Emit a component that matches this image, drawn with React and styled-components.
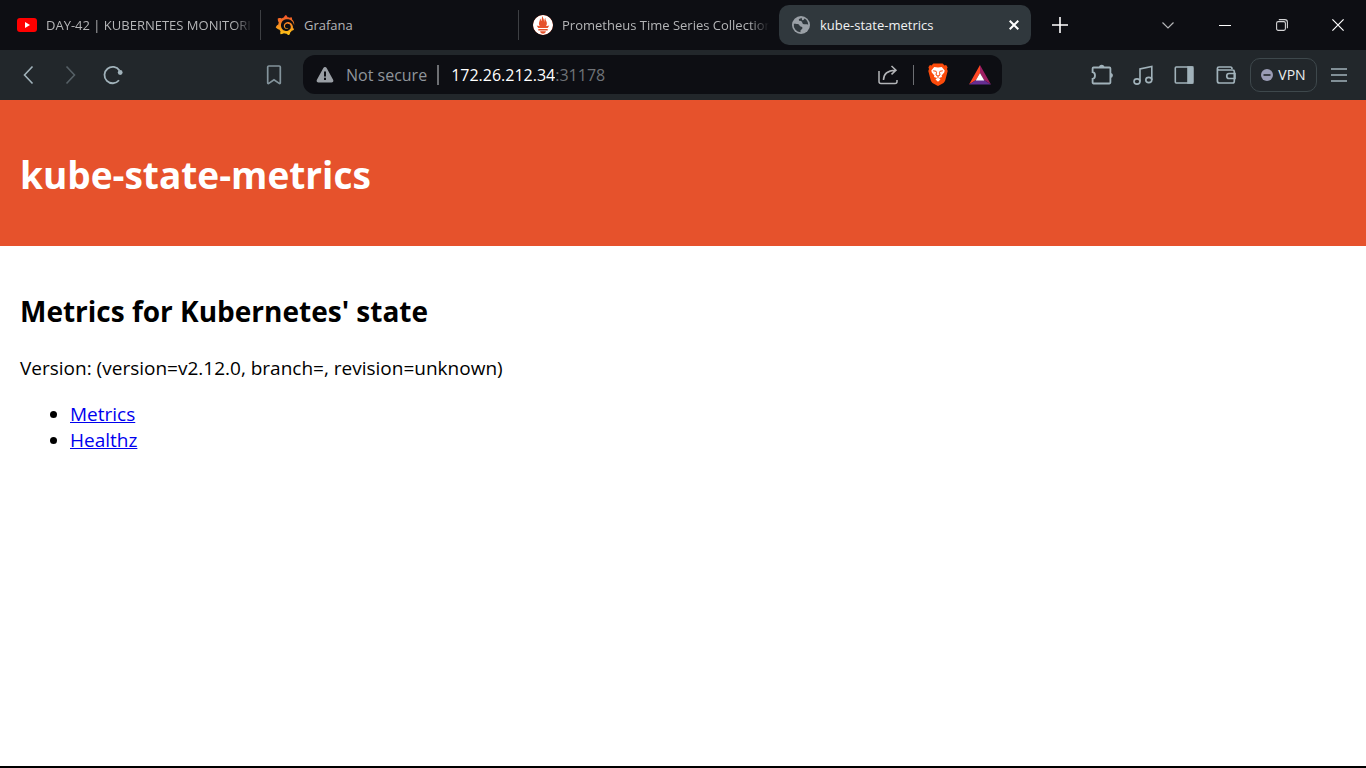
import React from "react";
import styled, { createGlobalStyle, css } from "styled-components";
import { SiGrafana, SiPrometheus } from "react-icons/si";

const GlobalStyle = createGlobalStyle`
  *, *::before, *::after { box-sizing: border-box; }
  html, body, #root { height: 100%; }
  body {
    margin: 0;
    background: #fff;
    color: #000;
    font-family: "Open Sans", "Noto Sans", sans-serif;
  }
  svg { display: block; flex: none; }
`;

const Window = styled.div`
  display: flex;
  flex-direction: column;
  min-height: 100%;
  border-bottom: 2px solid #000;
`;

/* Tab strip */
const TabStrip = styled.header`
  display: flex;
  align-items: center;
  height: 50px;
  padding-left: 5px;
  background: #0d0e13;
`;

const Tabs = styled.nav`
  display: grid;
  grid-template-columns: repeat(4, minmax(0, 1fr));
  flex: 0 1 1026px;
  min-width: 0;
  gap: 6px;
`;

const Tab = styled.div`
  position: relative;
  display: flex;
  min-width: 0;
  align-items: center;
  height: 40px;
  padding: 0 ${(p) => (p.$active ? 9 : 4)}px 0 12px;
  border-radius: 10px;
  background: ${(p) => (p.$active ? "#30383d" : "transparent")};
  ${(p) =>
    p.$divided &&
    css`
      &::after {
        content: "";
        position: absolute;
        top: 5px;
        right: -4px;
        width: 1px;
        height: 30px;
        background: #3d3f43;
      }
    `}
`;

const TabLink = styled.a`
  display: flex;
  flex: 1;
  min-width: 0;
  align-items: center;
  gap: 9px;
  color: ${(p) => (p.$active ? "#f1f2f3" : "#b4b5b7")};
  font-size: 13px;
  line-height: 20px;
  text-decoration: none;
`;

const TabIcon = styled.span`
  display: grid;
  flex: none;
  place-items: center;
  width: 20px;
  height: 20px;
  border-radius: 50%;
`;

const GrafanaMark = styled(SiGrafana)`
  fill: url(#grafana-fill);
`;

const PrometheusMark = styled(SiPrometheus)`
  border-radius: 50%;
  background: #e6522c;
  color: #fff;
`;

const TabTitle = styled.span`
  flex: 1;
  overflow: hidden;
  white-space: nowrap;
  ${(p) =>
    p.$faded &&
    css`
      mask-image: linear-gradient(to right, #000 calc(100% - 20px), transparent);
    `}
`;

const IconButton = styled.button`
  display: grid;
  flex: none;
  place-items: center;
  width: ${(p) => p.$width || 42}px;
  height: 34px;
  padding: 0;
  border: 0;
  background: none;
  color: ${(p) => p.$color || "#a1b2ba"};
`;

const WindowControls = styled.div`
  display: flex;
  margin-left: auto;
`;

/* Toolbar */
const Toolbar = styled.div`
  display: flex;
  align-items: center;
  height: 50px;
  padding: 0 5px 1px 8px;
  background: #22272b;
`;

const NavGroup = styled.div`
  display: flex;
  flex: none;
  margin-right: 119px;
`;

const AddressBar = styled.form`
  display: flex;
  flex: 1;
  min-width: 0;
  align-items: center;
  height: 39px;
  margin: 0 79px 0 8px;
  padding: 0 1px 0 13px;
  border-radius: 12px;
  background: #0d0e13;
  color: #85898e;
  font-size: 16px;
  line-height: 24px;
`;

const Security = styled.button`
  display: flex;
  flex: none;
  align-items: center;
  gap: 12px;
  padding: 0;
  border: 0;
  background: none;
  color: #8f959b;
  font: inherit;
`;

const Rule = styled.span`
  flex: none;
  width: ${(p) => p.$thickness}px;
  height: 20px;
  margin: ${(p) => p.$margin};
  background: #6d6f73;
`;

const Host = styled.input`
  flex: none;
  field-sizing: content;
  padding: 0;
  border: 0;
  outline: 0;
  background: none;
  color: #fff;
  font: inherit;
`;

const Port = styled.label`
  flex: 1;
  color: #6f7378;
`;

const VpnButton = styled.button`
  display: flex;
  flex: none;
  align-items: center;
  justify-content: center;
  gap: 5px;
  width: 67px;
  height: 34px;
  margin-left: 3px;
  padding: 0;
  border: 1px solid #3e484c;
  border-radius: 10px;
  background: none;
  color: #eceef0;
  font: inherit;
  font-size: 14px;
`;

/* Page */
const Banner = styled.header`
  padding: 48px 20px 45px;
  background: #e6522c;
  color: #fff;
`;

const Title = styled.h1`
  margin: 0;
  font-size: 37px;
  font-weight: 700;
  line-height: 53px;
`;

const Content = styled.main`
  padding: 20px;
  font-size: 19px;
  line-height: 26px;
`;

const Subtitle = styled.h2`
  margin: 25px 0 24px;
  font-size: 28px;
  font-weight: 700;
  line-height: 40px;
`;

const Version = styled.p`
  margin: 0 0 20px;
`;

const LinkList = styled.ul`
  margin: 0;
  padding-left: 50px;
`;

const PageLink = styled.a`
  color: #0000ee;
  text-decoration: underline;
`;

function Line({ size = 20, width = 2, children, ...rest }) {
  return (
    <svg
      width={size}
      height={size}
      viewBox={`0 0 ${size} ${size}`}
      fill="none"
      stroke="currentColor"
      strokeWidth={width}
      aria-hidden="true"
      {...rest}
    >
      {children}
    </svg>
  );
}

const YoutubeIcon = () => (
  <svg width="20" height="20" viewBox="0 0 20 20" aria-hidden="true">
    <rect y="3" width="20" height="14" rx="3" fill="#f00" />
    <path d="M8 7l5 3-5 3z" fill="#fff" />
  </svg>
);

const GlobeIcon = () => (
  <svg width="18" height="18" viewBox="0 0 18 18" aria-hidden="true">
    <circle cx="9" cy="9" r="9" fill="#9aa0a6" />
    <path
      d="M1.800 7.800c1.200-.2 3.400.1 4.600.5 1.300.5 1 1.900 2.200 2.200 1.200.2 2 .6 1.800 1.700-.2 1.300-1.700 1.300-1.900 2.400v1.600a7.200 7.200 0 0 1-6.700-8.400zM9.300 1.800c-.9 1.100-2.800.9-2.500 2.300.3 1.300 2 .6 2.900 1.500.8.8.4 2 1.500 2.500 1.500.6 3.200-.2 5 .6A7.200 7.200 0 0 0 12.400 2.600c-.4 1.600-1.300 1.800-2 1.600-.7-.3-.1-1.500-1.100-2.400z"
      fill="#30383d"
    />
  </svg>
);

const BraveIcon = () => (
  <svg width="20" height="23" viewBox="0 0 20 23" aria-hidden="true">
    <path
      d="M5.400.4h9.200l1.900 2 1.600-.3 1.500 2.200-.6 1.600.7 2.200-2.500 9.500c-.4 1.300-1.200 2-2.100 2.700L11 22.600c-.6.4-1.400.4-2 0l-4.100-2.300c-.9-.7-1.700-1.400-2.100-2.700L.3 8.100 1 5.900.4 4.300l1.500-2.200 1.600.3z"
      fill="#fb4b0b"
    />
    <path
      d="M6.200 3.900l3.800.7 3.800-.7 2.900 3.600-.5 2-2.600 2.900.4 1.700-3.100.9 1.600 1.600L10 18.700l-2.500-2.100L9.100 15 6 14.100l.4-1.700-2.600-2.900-.5-2z"
      fill="#fff"
    />
    <path
      d="M5.200 7.800l2.900.5.4 1-.5 2.700 2 1 2-1-.5-2.700.4-1 2.900-.5M10 13v2.200"
      fill="none"
      stroke="#fb4b0b"
      strokeWidth="1"
    />
  </svg>
);

const RewardsIcon = () => (
  <svg width="22" height="20" viewBox="0 0 22 20" aria-hidden="true">
    <path d="M11 0v8L7 15l-7 4.500z" fill="#ff4724" />
    <path d="M11 0l11 19.500-7-4.500-4-7z" fill="#9e1f63" />
    <path d="M0 19.500L7 15h8l7 4.500z" fill="#662d91" />
    <path d="M11 8l4.300 7.500H6.700z" fill="#fff" />
  </svg>
);

const TABS = [
  { title: "DAY-42 | KUBERNETES MONITORI", icon: <YoutubeIcon />, faded: true, divided: true },
  { title: "Grafana", icon: <GrafanaMark size={20} />, divided: true },
  {
    title: "Prometheus Time Series Collection",
    icon: <PrometheusMark size={20} />,
    faded: true,
  },
  { title: "kube-state-metrics", icon: <GlobeIcon />, active: true },
];

function BrowserTabs() {
  return (
    <TabStrip>
      <svg width="0" height="0" aria-hidden="true">
        <linearGradient id="grafana-fill" x1="0" y1="0" x2="0" y2="1">
          <stop offset="0" stopColor="#f0502a" />
          <stop offset="1" stopColor="#fdc716" />
        </linearGradient>
      </svg>
      <Tabs aria-label="Tabs">
        {TABS.map((t) => (
          <Tab key={t.title} $active={t.active} $divided={t.divided}>
            <TabLink href="#" $active={t.active}>
              <TabIcon>{t.icon}</TabIcon>
              <TabTitle $faded={t.faded}>{t.title}</TabTitle>
            </TabLink>
            {t.active && (
              <IconButton type="button" $width={16} $color="#fff" aria-label="Close tab">
                <Line size={10} width={2}>
                  <path d="M.7.7l8.600 8.600M9.300.7L.7 9.300" />
                </Line>
              </IconButton>
            )}
          </Tab>
        ))}
      </Tabs>
      <IconButton type="button" $width={58} $color="#fff" aria-label="New tab">
        <Line size={16} width={1.6}>
          <path d="M8 0v16M0 8h16" />
        </Line>
      </IconButton>
      <WindowControls>
        <IconButton type="button" $width={56} $color="#b5b6b8" aria-label="Search tabs">
          <Line size={12} width={1.2}>
            <path d="M.5 3.500L6 9l5.500-5.500" />
          </Line>
        </IconButton>
        <IconButton type="button" $width={57} $color="#fff" aria-label="Minimize">
          <Line size={12} width={1}>
            <path d="M0 6.500h12" />
          </Line>
        </IconButton>
        <IconButton type="button" $width={57} $color="#d4d4d6" aria-label="Restore">
          <Line size={12} width={1.1}>
            <rect x=".6" y="2.600" width="8.800" height="8.800" rx="1.600" />
            <path d="M2.800.6h6a2.600 2.600 0 0 1 2.600 2.600v6" />
          </Line>
        </IconButton>
        <IconButton type="button" $width={56} $color="#fff" aria-label="Close">
          <Line size={12} width={1.2}>
            <path d="M.4.4l11.200 11.200M11.600.4L.4 11.600" />
          </Line>
        </IconButton>
      </WindowControls>
    </TabStrip>
  );
}

function BrowserToolbar() {
  return (
    <Toolbar>
      <NavGroup>
        <IconButton type="button" aria-label="Back">
          <Line width={1.6}>
            <path d="M13.500 1.500L5.500 10l8 8.500" />
          </Line>
        </IconButton>
        <IconButton type="button" $color="#566066" aria-label="Forward">
          <Line width={1.6}>
            <path d="M5.500 1.500l8 8.500-8 8.500" />
          </Line>
        </IconButton>
        <IconButton type="button" aria-label="Reload">
          <Line width={1.8}>
            <path d="M16 15.300A8.200 8.200 0 1 1 16.500 5.500" />
            <circle cx="17.200" cy="7.500" r="2.400" fill="currentColor" stroke="none" />
          </Line>
        </IconButton>
      </NavGroup>
      <IconButton type="button" $color="#84949c" aria-label="Bookmark this page">
        <Line width={1.7}>
          <path d="M4.800 1h10.400c.6 0 1.100.4 1.100 1.100v15.800c0 .6-.6.9-1.100.5L10 14.700l-5.200 3.700c-.5.4-1.100.1-1.100-.5V2.100C3.700 1.400 4.200 1 4.800 1z" />
        </Line>
      </IconButton>
      <AddressBar onSubmit={(e) => e.preventDefault()}>
        <Security type="button">
          <svg width="18" height="16" viewBox="0 0 18 16" aria-hidden="true">
            <path
              d="M7.200 1.200c.8-1.500 2.800-1.500 3.600 0l6.300 11.600c.7 1.300-.1 2.700-1.500 2.700H2.400C1 15.500.2 14.100.9 12.800z"
              fill="#9a9fa5"
            />
            <path d="M9 4.500v5M9 10.800V13" stroke="#0d0e13" strokeWidth="2" />
          </svg>
          Not secure
        </Security>
        <Rule $thickness={2} $margin="0 12px 0 10px" />
        <Host id="address" aria-label="Address" defaultValue="172.26.212.34" />
        <Port htmlFor="address">:31178</Port>
        <IconButton type="button" $width={50} $color="#b3b5b8" aria-label="Share">
          <Line width={1.5}>
            <path d="M1 6v10.500c0 1.200.8 2 2 2h14c1.200 0 2-.7 2-2V15M5.500 15C5.500 9 9 5.500 17.500 5.200M13.500 1l4.500 4.200-4.500 4.200" />
          </Line>
        </IconButton>
        <Rule $thickness={1} $margin="0 3px 0 0" />
        <IconButton type="button" aria-label="Brave Shields">
          <BraveIcon />
        </IconButton>
        <IconButton type="button" aria-label="Brave Rewards">
          <RewardsIcon />
        </IconButton>
      </AddressBar>
      <IconButton type="button" aria-label="Extensions">
        <Line size={22} width={1.8}>
          <path d="M2.500 3.500h16c.5 0 .9.400.9.900v14.200c0 .5-.4.900-.9.900h-16c-.5 0-.9-.4-.9-.9v-3.800c3.200-.4 3.200-6.200 0-6.600V4.400c0-.5.4-.9.900-.9z" />
          <path d="M8 3.500a2.700 2.700 0 0 1 5.400 0zM19.400 9a2.500 2.500 0 0 1 0 5z" fill="currentColor" stroke="none" />
        </Line>
      </IconButton>
      <IconButton type="button" $width={40} aria-label="Media">
        <Line width={1.6}>
          <path d="M7 16.500V4L18.800 1.500V15" />
          <ellipse cx="4" cy="16.500" rx="3" ry="2.600" />
          <ellipse cx="15.800" cy="15" rx="3" ry="2.600" />
        </Line>
      </IconButton>
      <IconButton type="button" aria-label="Sidebar">
        <Line width={1.6}>
          <rect x="1.300" y="2" width="17.400" height="16" rx="1" />
          <path d="M14 2h4.700v16H14z" fill="currentColor" />
        </Line>
      </IconButton>
      <IconButton type="button" aria-label="Wallet">
        <Line width={1.7}>
          <path d="M1.400 4v12c0 1.200.8 2 2 2h13.200c1 0 1.700-.7 1.700-1.700V6.500c0-1-.7-1.500-1.700-1.500H3c-2.200 0-2.200-3 0-3h11.500c1 0 1.500.8 1.500 2M19 8.500h-6c-3 0-3 5 0 5h6z" />
        </Line>
      </IconButton>
      <VpnButton type="button">
        <svg width="12" height="12" viewBox="0 0 12 12" aria-hidden="true">
          <circle cx="6" cy="6" r="6" fill="#9a9cb5" />
          <path d="M2.500 6h7" stroke="#22272b" strokeWidth="1.600" />
        </svg>
        VPN
      </VpnButton>
      <IconButton type="button" $width={44} aria-label="Menu">
        <Line size={18} width={1.5}>
          <path d="M1 3h16M1 9h16M1 15h16" />
        </Line>
      </IconButton>
    </Toolbar>
  );
}

export default function App() {
  return (
    <Window>
      <GlobalStyle />
      <BrowserTabs />
      <BrowserToolbar />
      <Banner>
        <Title>kube-state-metrics</Title>
      </Banner>
      <Content>
        <Subtitle>Metrics for Kubernetes' state</Subtitle>
        <Version>Version: (version=v2.12.0, branch=, revision=unknown)</Version>
        <LinkList>
          <li>
            <PageLink href="#metrics">Metrics</PageLink>
          </li>
          <li>
            <PageLink href="#healthz">Healthz</PageLink>
          </li>
        </LinkList>
      </Content>
    </Window>
  );
}
